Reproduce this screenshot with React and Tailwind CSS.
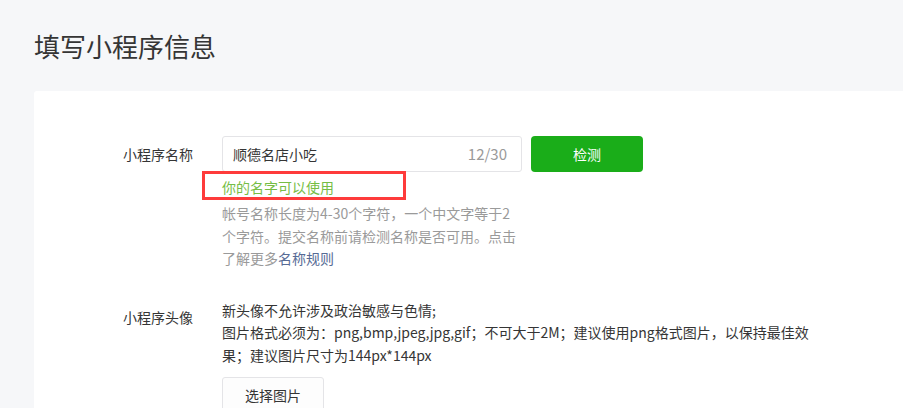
import React from 'react';

const App = () => {
  return (
    <div className="h-[408px] w-[903px] overflow-hidden bg-[#f6f7f9] pl-[34px] font-['Noto_Sans_CJK_SC',sans-serif]">
      <h1 className="pt-[28px] text-[26px] leading-[36px] font-normal text-[#353535]">
        填写小程序信息
      </h1>

      <div className="mt-[27px] min-h-[330px] rounded-tl-[3px] bg-white pl-[89px] pt-[45px]">
        {/* 小程序名称 */}
        <div className="flex">
          <div className="w-[99px] text-[14px] leading-[36px] text-[#353535]">小程序名称</div>
          <div>
            <div className="flex">
              <div className="flex h-[36px] w-[300px] items-center justify-between rounded-[3px] border border-[#e4e4e7] pl-[10px] pr-[14px] text-[14px]">
                <span className="text-[#353535]">顺德名店小吃</span>
                <span className="text-[15px] text-[#9a9a9a]">12/30</span>
              </div>
              <button className="ml-[9px] h-[36px] w-[112px] rounded-[4px] bg-[#1aad19] text-[14px] text-white">
                检测
              </button>
            </div>

            <div className="relative">
              <div className="pointer-events-none absolute left-[-20px] top-[-1px] h-[29px] w-[204px] border-[3px] border-[#fe3b3b]" />
              <p className="text-[14px] leading-[30px] text-[#76bd45]">你的名字可以使用</p>
            </div>

            <p className="w-[300px] text-[14px] leading-[22.5px] text-[#9a9a9a]">
              <span className="block">帐号名称长度为4-30个字符，一个中文字等于2</span>
              <span className="block">个字符。提交名称前请检测名称是否可用。点击</span>
              <span className="block">
                了解更多<a className="text-[#576b95]">名称规则</a>
              </span>
            </p>
          </div>
        </div>

        {/* 小程序头像 */}
        <div className="mt-[29px] flex">
          <div className="w-[99px] text-[14px] leading-[36px] text-[#353535]">小程序头像</div>
          <div>
            <p className="text-[14px] leading-[22.5px] text-[#353535]">
              <span className="block">新头像不允许涉及政治敏感与色情;</span>
              <span className="block whitespace-nowrap">
                图片格式必须为：png,bmp,jpeg,jpg,gif；不可大于2M；建议使用png格式图片，以保持最佳效
              </span>
              <span className="block">果；建议图片尺寸为144px*144px</span>
            </p>
            <button className="mt-[11px] h-[36px] w-[102px] rounded-[3px] border border-[#e4e4e7] bg-[#fdfdfd] text-[14px] text-[#353535]">
              选择图片
            </button>
          </div>
        </div>
      </div>
    </div>
  );
};

export default App;
